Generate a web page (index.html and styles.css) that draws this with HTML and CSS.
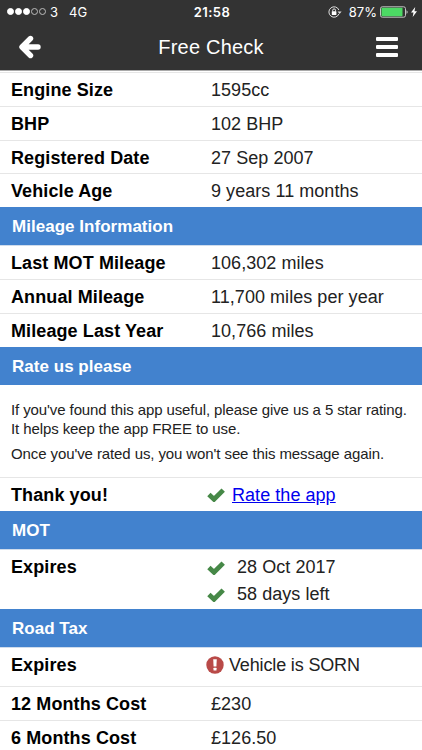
FILE: index.html
```
<!DOCTYPE html>
<html lang="en">
<head>
  <meta charset="UTF-8" />
  <meta name="viewport" content="width=device-width, initial-scale=1.0" />
  <title>Free Check</title>
  <link rel="stylesheet" href="styles.css">
</head>
<body>
  <header class="top">
    <div class="status-bar">
      <div class="status-left">
        <span class="signal"><i class="on"></i><i class="on"></i><i class="on"></i><i></i><i></i></span>
        <span class="carrier">3</span>
        <span>4G</span>
      </div>
      <div class="clock">21:58</div>
      <div class="status-right">
        <svg class="lock" viewBox="0 0 14 12" width="14" height="12">
          <path d="M10.9 4A5.2 5.2 0 1 0 10.9 8" fill="none" stroke="#ddd" stroke-width="1" />
          <path d="M9.6 5.5h4l-2 2.6z" fill="#ddd" />
          <rect x="3.8" y="5.3" width="4.6" height="3.6" rx=".4" fill="#fff" />
          <path d="M4.7 5.5V4.3a1.4 1.4 0 0 1 2.8 0v1.2" fill="none" stroke="#fff" stroke-width=".9" />
        </svg>
        <span class="percent">87%</span>
        <svg class="battery" viewBox="0 0 28 12" width="28" height="12">
          <rect x=".5" y=".8" width="25" height="10.4" rx="1.8" fill="none" stroke="#c4c4c4" />
          <rect x="1.5" y="1.8" width="21" height="8.4" rx=".7" fill="#4cd964" />
          <path d="M26.6 4.2c1.2.5 1.2 3.1 0 3.6z" fill="#fff" />
        </svg>
        <svg class="bolt" viewBox="0 0 6 10" width="6" height="10">
          <path d="M4.2 0 0 5.6h2.5L1.7 10 6 4.2H3.5z" fill="#fff" />
        </svg>
      </div>
    </div>
    <nav class="nav">
      <svg class="back" viewBox="0 0 22 24" width="22" height="24">
        <path d="M11.5 3.500 3 12l8.500 8.500M4 12h15" fill="none" stroke="#fff" stroke-width="5.400" stroke-linecap="round" stroke-linejoin="round" />
      </svg>
      <h1>Free Check</h1>
      <div class="menu"><span></span><span></span><span></span></div>
    </nav>
  </header>

  <main class="report">
    <div class="row"><b>Engine Size</b><span>1595cc</span></div>
    <div class="row"><b>BHP</b><span>102 BHP</span></div>
    <div class="row"><b>Registered Date</b><span>27 Sep 2007</span></div>
    <div class="row"><b>Vehicle Age</b><span>9 years 11 months</span></div>

    <h2>Mileage Information</h2>
    <div class="row"><b>Last MOT Mileage</b><span>106,302 miles</span></div>
    <div class="row"><b>Annual Mileage</b><span>11,700 miles per year</span></div>
    <div class="row"><b>Mileage Last Year</b><span>10,766 miles</span></div>

    <h2>Rate us please</h2>
    <div class="message">
      <p>If you've found this app useful, please give us a 5 star rating.<br>It helps keep the app FREE to use.</p>
      <p>Once you've rated us, you won't see this message again.</p>
    </div>
    <div class="row">
      <b>Thank you!</b>
      <div class="line">
        <svg class="tick" viewBox="0 0 18 14" width="18" height="14"><path d="M1.900 6.500 7 11.300 16.200 2.100" /></svg>
        <a href="#">Rate the app</a>
      </div>
    </div>

    <h2>MOT</h2>
    <div class="row row-mot">
      <b>Expires</b>
      <div class="lines">
        <div class="line wide">
          <svg class="tick" viewBox="0 0 18 14" width="18" height="14"><path d="M1.900 6.500 7 11.300 16.200 2.100" /></svg>
          <span>28 Oct 2017</span>
        </div>
        <div class="line wide">
          <svg class="tick" viewBox="0 0 18 14" width="18" height="14"><path d="M1.900 6.500 7 11.300 16.200 2.100" /></svg>
          <span>58 days left</span>
        </div>
      </div>
    </div>

    <h2>Road Tax</h2>
    <div class="row row-tax">
      <b>Expires</b>
      <div class="line alert">
        <svg viewBox="0 0 18 18" width="18" height="18">
          <circle cx="9" cy="9" r="8.700" fill="#b94a48" />
          <path d="M7.200 3.200h3.600l-.4 7.200H7.600z" fill="#fff" />
          <rect x="7.500" y="11.800" width="3" height="2.800" rx=".4" fill="#fff" />
        </svg>
        <span>Vehicle is SORN</span>
      </div>
    </div>
    <div class="row"><b>12 Months Cost</b><span>£230</span></div>
    <div class="row"><b>6 Months Cost</b><span>£126.50</span></div>
  </main>
</body>
</html>
```
FILE: styles.css
```
* {
  box-sizing: border-box;
}

body {
  margin: 0;
  height: 750px;
  overflow: hidden;
  font-family: "Liberation Sans", Arial, sans-serif;
  font-size: 18px;
  color: #222;
  background: #fff;
}

.top {
  height: 71px;
  color: #fff;
  background: #333;
  border-bottom: 1px solid #aaa;
}

.status-bar {
  display: grid;
  grid-template-columns: 1fr auto 1fr;
  align-items: center;
  height: 23px;
  padding: 0 5px 0 7px;
  font-family: Inter, sans-serif;
  font-size: 13px;
}

.status-left,
.status-right {
  display: flex;
  align-items: center;
}

.status-right {
  justify-content: flex-end;
}

.signal {
  display: flex;
  gap: 1px;
  margin-right: 4px;
}

.signal i {
  width: 7px;
  height: 7px;
  border: 1px solid #bbb;
  border-radius: 50%;
}

.signal .on {
  background: #fff;
  border-color: #fff;
}

.carrier {
  margin-right: 11px;
}

.clock {
  font-weight: 600;
  letter-spacing: 0.5px;
}

.percent {
  margin: 0 3px 0 7px;
}

.bolt {
  margin-left: 3px;
}

.nav {
  display: flex;
  align-items: center;
  justify-content: space-between;
  height: 48px;
  padding: 0 24px 0 19px;
}

.nav h1 {
  margin: 0 0 0 5px;
  font-size: 20px;
  font-weight: normal;
  letter-spacing: 0.2px;
}

.menu {
  display: grid;
  gap: 4px;
}

.menu span {
  width: 22px;
  height: 4px;
  border-radius: 1px;
  background: #fff;
}

.report {
  padding-top: 1px;
}

.row {
  display: flex;
  height: 33.75px;
  padding: 0 11px;
  line-height: 34px;
  letter-spacing: 0.05px;
  border-top: 1px solid #e6e6e6;
}

.row b {
  flex: none;
  width: 200px;
  letter-spacing: 0.1px;
  color: #000;
}

h2 {
  height: 38.4px;
  margin: 0;
  padding-left: 12px;
  font-size: 17px;
  line-height: 39px;
  letter-spacing: 0.03px;
  color: #fff;
  background: #4282ce;
}

h2 + .row {
  border-top-color: #cfdcec;
}

.message {
  height: 92px;
  padding: 15px 11px 0;
  font-size: 15px;
  line-height: 19px;
  letter-spacing: -0.1px;
}

.message p {
  margin: 0 0 6px;
  white-space: nowrap;
}

.line {
  display: flex;
  align-items: center;
  gap: 7px;
  margin-left: -4px;
}

.line a {
  padding-top: 1px;
  color: #0000ee;
}

.tick {
  margin-top: 2px;
  fill: none;
  stroke: #468847;
  stroke-width: 4.8;
}

.row-mot {
  height: 59.5px;
}

.lines {
  padding-top: 3px;
}

.lines .line {
  height: 27.4px;
}

.wide {
  gap: 12px;
}

.row-tax {
  height: 39px;
}

.alert {
  gap: 5px;
  height: 34px;
  margin-left: -5px;
  letter-spacing: -0.15px;
}
```
